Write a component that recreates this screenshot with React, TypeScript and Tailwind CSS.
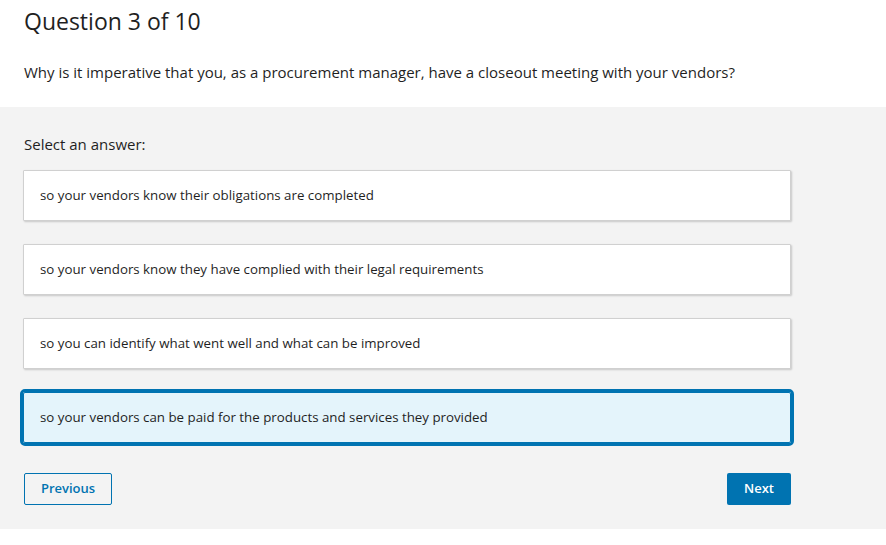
const OPTIONS = [
  "so your vendors know their obligations are completed",
  "so your vendors know they have complied with their legal requirements",
  "so you can identify what went well and what can be improved",
  "so your vendors can be paid for the products and services they provided",
];

const SELECTED = 3;

export default function App() {
  return (
    <div
      className="w-[886px] h-[545px] bg-white text-[#1f1f1f]"
      style={{ fontFamily: '"Open Sans", "Noto Sans", sans-serif' }}
    >
      <header className="px-6 pt-[5px] h-[107px]">
        <h1 className="text-[23px] leading-[32px] font-normal">Question 3 of 10</h1>
        <p className="mt-[25px] text-[15px] leading-[20px]">
          Why is it imperative that you, as a procurement manager, have a closeout meeting with your vendors?
        </p>
      </header>

      <section className="bg-[#f3f3f3] h-[422px] pl-[23px] pr-[95px] pt-[27px]">
        <div className="text-[15px] leading-[20px] pl-[1px]">Select an answer:</div>
        <div className="mt-[16px] flex flex-col gap-[23px]">
          {OPTIONS.map((opt, i) => (
            <AnswerCard key={opt} text={opt} selected={i === SELECTED} />
          ))}
        </div>
        <div className="mt-[30px] flex justify-between pl-[1px]">
          <button className="h-[32px] w-[88px] border border-[#0073b1] rounded-[2px] text-[#0073b1] text-[13px] font-semibold bg-transparent">
            Previous
          </button>
          <button className="h-[32px] w-[64px] rounded-[2px] bg-[#0073b1] text-white text-[13px] font-semibold">
            Next
          </button>
        </div>
      </section>
    </div>
  );
}

function AnswerCard({ text, selected }: { text: string; selected: boolean }) {
  return (
    <div
      className={
        selected
          ? "h-[51px] flex items-center px-4 rounded-[2px] border border-[#0073b1] bg-[#e4f4fb] outline-[3px] outline-solid outline-[#0073b1] text-[13.3px]"
          : "h-[51px] flex items-center px-4 rounded-[1px] border border-[#d0d0d0] bg-white shadow-[1px_1px_2px_rgba(0,0,0,0.18)] text-[13.3px]"
      }
    >
      {text}
    </div>
  );
}
